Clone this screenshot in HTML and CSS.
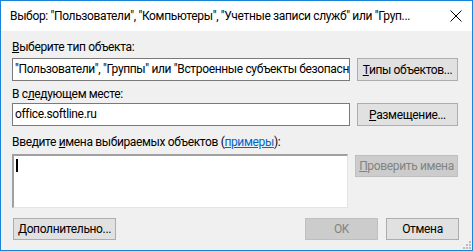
FILE: index.html
```html
<!DOCTYPE html>
<html>
    <head>
        <title>Выбор объектов</title>
        <link rel="stylesheet" href="styles.css">
    </head>
    <body>
        <div class="window">
            <div class="titlebar">
                <span class="title">Выбор: "Пользователи", "Компьютеры", "Учетные записи служб" или "Груп...</span>
                <svg class="close" width="12" height="12" viewBox="0 0 12 12">
                    <path d="M0.5 0.5 L11.5 11.5 M11.5 0.5 L0.5 11.5" stroke="#000" stroke-width="1" fill="none"/>
                </svg>
            </div>

            <div class="content">
                <div class="label first"><u>В</u>ыберите тип объекта:</div>
                <div class="row">
                    <div class="field">"Пользователи", "Группы" или "Встроенные субъекты безопасности"</div>
                    <button class="btn"><u>Т</u>ипы объектов...</button>
                </div>

                <div class="label">В с<u>л</u>едующем месте:</div>
                <div class="row">
                    <div class="field">office.softline.ru</div>
                    <button class="btn"><u>Р</u>азмещение...</button>
                </div>

                <div class="label third">Введите <u>и</u>мена выбираемых объектов (<a class="link">примеры</a>):</div>
                <div class="row top">
                    <div class="memo"><span class="caret"></span></div>
                    <button class="btn off check"><u>П</u>роверить имена</button>
                </div>

                <div class="footer">
                    <button class="btn wide"><u>Д</u>ополнительно...</button>
                    <div class="spacer"></div>
                    <button class="btn off ok">OK</button>
                    <button class="btn ok">Отмена</button>
                </div>
            </div>

            <svg class="grip" width="9" height="9" viewBox="0 0 9 9">
                <rect x="7" y="1" width="2" height="2" fill="#bcbcbc"/>
                <rect x="4" y="4" width="2" height="2" fill="#bcbcbc"/>
                <rect x="7" y="4" width="2" height="2" fill="#bcbcbc"/>
                <rect x="1" y="7" width="2" height="2" fill="#bcbcbc"/>
                <rect x="4" y="7" width="2" height="2" fill="#bcbcbc"/>
                <rect x="7" y="7" width="2" height="2" fill="#bcbcbc"/>
            </svg>
        </div>
    </body>
</html>
```

FILE: styles.css
```css
body{
    margin: 0;
    font-family: Roboto, "Liberation Sans", sans-serif;
    font-size: 12px;
    letter-spacing: -0.35px;
    color: #000;
}

.window{
    width: 471px;
    height: 249px;
    border: solid 1px #1883d7;
    background-color: #f0f0f0;
    position: relative;
    display: flex;
    flex-direction: column;
}

.titlebar{
    height: 30px;
    background-color: #fff;
    display: flex;
    align-items: center;
    padding-left: 9px;
    padding-right: 10px;
}

.title{
    flex: 1;
    white-space: nowrap;
    overflow: hidden;
    font-size: 12px;
}

.content{
    padding: 0 13px 0 11px;
    display: flex;
    flex-direction: column;
}

.label{
    height: 15px;
    line-height: 15px;
    margin-top: 6px;
    margin-bottom: 1px;
    white-space: nowrap;
}

.label.first{
    margin-top: 9px;
    margin-bottom: 3px;
}

.label.third{
    margin-top: 9px;
    margin-bottom: 4px;
}

.row{
    display: flex;
    gap: 7px;
    align-items: center;
}

.row.top{
    align-items: flex-start;
}

.field{
    height: 21px;
    line-height: 21px;
    border: solid 1px #7a7a7a;
    background-color: #fff;
    padding-left: 2px;
    width: 334px;
    flex: none;
    white-space: nowrap;
    overflow: hidden;
}

.btn{
    font-family: inherit;
    font-size: 12px;
    letter-spacing: inherit;
    color: #000;
    height: 23px;
    width: 101px;
    flex: none;
    background-color: #e1e1e1;
    border: solid 1px #adadad;
    padding: 0;
    margin: 0;
    white-space: nowrap;
    overflow: hidden;
}

.btn.off{
    background-color: #cccccc;
    border-color: #bfbfbf;
    color: #838383;
}

.btn.check{
    width: 103px;
    margin-top: 1px;
    height: 22px;
}

.memo{
    width: 333px;
    height: 51px;
    flex: none;
    background-color: #fff;
    border-top: solid 2px #a0a0a0;
    border-left: solid 2px #a0a0a0;
    border-right: solid 1px #e3e3e3;
    border-bottom: solid 1px #e3e3e3;
    position: relative;
}

.caret{
    position: absolute;
    left: 2px;
    top: 3px;
    width: 2px;
    height: 13px;
    background-color: #000;
}

.link{
    color: #0066cc;
    text-decoration: underline;
}

.footer{
    display: flex;
    margin-top: 10px;
    gap: 8px;
}

.footer .spacer{
    flex: 1;
}

.btn.wide{
    width: 103px;
    height: 22px;
    margin-left: 1px;
}

.btn.ok{
    width: 73px;
    height: 22px;
}

.grip{
    position: absolute;
    right: 1px;
    bottom: 1px;
}
```
